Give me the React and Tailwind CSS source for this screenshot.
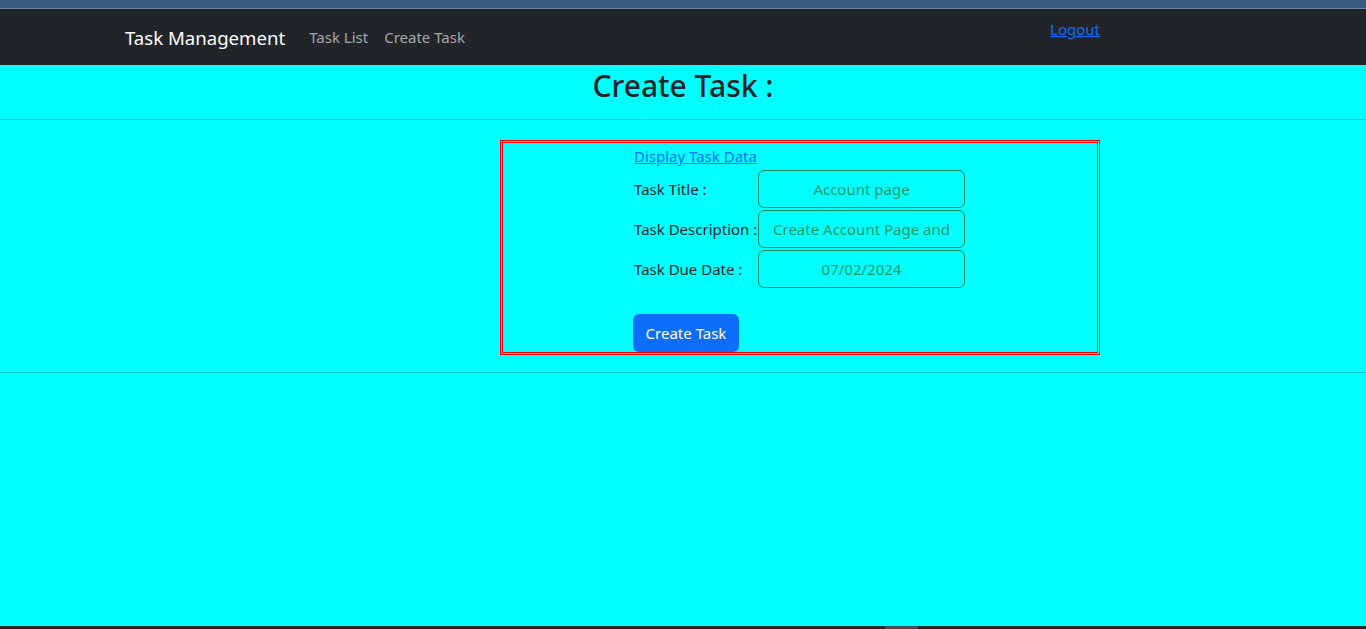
import React from 'react';

const font = { fontFamily: '"Noto Sans", "Open Sans", sans-serif' };

const fields = [
  { label: 'Task Title :', value: 'Account page' },
  { label: 'Task Description :', value: 'Create Account Page and' },
  { label: 'Task Due Date :', value: '07/02/2024' },
];

const App = () => {
  return (
    <div className="h-[629px] w-[1366px] overflow-hidden flex flex-col bg-[#00ffff]" style={font}>
      {/* window strip */}
      <div className="h-[9px] bg-[#3a5a7e] border-b border-[#6a86a4]" />

      {/* navbar */}
      <nav className="h-[56px] bg-[#212529] flex items-start">
        <div className="flex items-center h-full pl-[125px]">
          <span className="text-[18.6px] text-white leading-none pt-[2px]">Task Management</span>
          <a className="ml-[24px] text-[15px] text-[#a6a8aa] leading-none">Task List</a>
          <a className="ml-[16px] text-[15px] text-[#a6a8aa] leading-none">Create Task</a>
        </div>
        <a className="ml-auto mr-[266px] mt-[8px] text-[15px] leading-6 text-[#0d6efd] underline">Logout</a>
      </nav>

      {/* heading */}
      <div className="h-[54px] flex justify-center pt-px">
        <h1 className="text-[30px] font-medium leading-[1.3] text-[#212529]">Create Task :</h1>
      </div>
      <div className="h-px bg-[#08c8ca]" />

      {/* form box */}
      <div className="mt-[20px] ml-[500px] w-[600px] h-[215px] border-[3px] border-double border-[#ff0000]">
        <div className="pl-[131px] pt-px flex flex-col">
          <a className="text-[15px] leading-6 text-[#0d6efd] underline w-fit">Display Task Data</a>
          <div className="mt-[2px] flex flex-col gap-[2px]">
            {fields.map((f) => (
              <div key={f.label} className="flex items-center h-[38px]">
                <span className="w-[124px] text-[15px] text-[#212529] whitespace-nowrap">{f.label}</span>
                <div className="w-[207px] h-[38px] rounded-[6px] border border-[#198754] flex items-center justify-center px-3 overflow-hidden">
                  <span className="text-[15px] text-[#1f9a66] whitespace-nowrap">{f.value}</span>
                </div>
              </div>
            ))}
          </div>
          <button className="mt-[26px] w-[106px] h-[38px] -ml-px rounded-[6px] bg-[#0d6efd] text-white text-[15px]">
            Create Task
          </button>
        </div>
      </div>
      <div className="mt-[17px] h-px bg-[#08c8ca]" />

      <div className="flex-1" />
      {/* bottom scrollbar strip */}
      <div className="h-[3px] bg-[#242424] relative">
        <div className="absolute left-[885px] top-0 h-[3px] w-[33px] bg-[#4d4d4d]" />
      </div>
    </div>
  );
};

export default App;
